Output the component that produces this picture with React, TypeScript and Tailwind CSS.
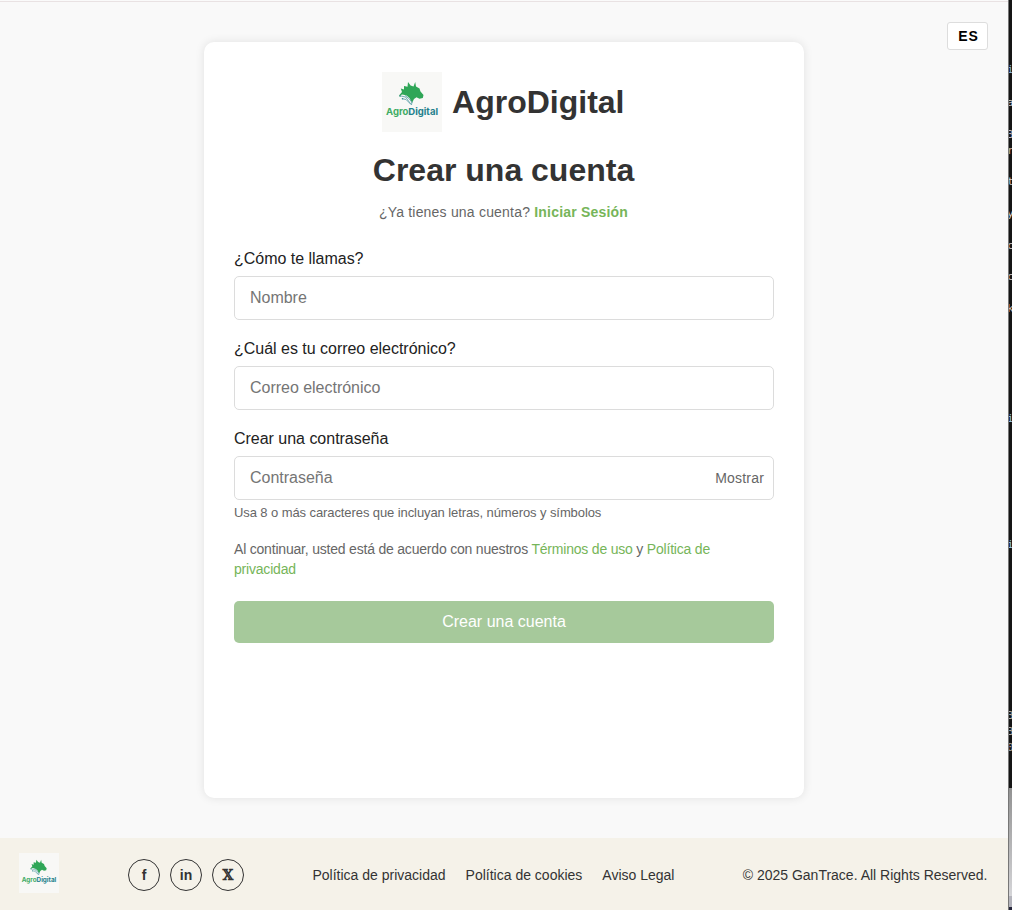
import React from "react";

function Logo({ className }: { className: string }) {
  return (
    <svg viewBox="0 0 60 60" className={className} role="img" aria-label="Logo">
      <rect width="60" height="60" fill="#f8f8f6" />
      <path
        d="M17 23.5L20 20L18.8 16.5L22 17.5L22 14L25.5 14.8L26 10L28.6 13.5L31.5 14.5L33.2 10L34 14.5L37.5 16.5L38.5 19.5L41.5 23L40.8 26L37.5 26.8L34.5 25.2L32 27L30 31L27.5 26L24.5 23.5L20.5 22.5Z"
        fill="#2fa657"
      />
      <path d="M18 23.8L23.5 25L29.5 33L30 29.5M20.5 26.8L24 27.5L28.5 32M23 23.5L27.5 27L30 30.5" fill="none" stroke="#65a5ad" strokeWidth="0.9" />
      <circle cx="18" cy="23.8" r="0.9" fill="#2b9170" />
      <circle cx="20.5" cy="26.8" r="0.8" fill="#2b8790" />
      <text x="4" y="42.8" fontFamily="Inter, 'Liberation Sans', sans-serif" fontSize="9.3" fontWeight="700" textLength="52" lengthAdjust="spacingAndGlyphs">
        <tspan fill="#3fac64">Agro</tspan>
        <tspan fill="#23808c">Digital</tspan>
      </text>
    </svg>
  );
}

function Field({ label, placeholder, type, children }: { label: string; placeholder: string; type: string; children?: React.ReactNode }) {
  return (
    <label className="block text-base leading-[18px] tracking-[-0.02px] text-[#222]">
      {label}
      <span className="mt-2 flex h-11 items-center rounded-[5px] border border-[#dcdcdc] bg-white pr-[9px] pl-[15px]">
        <input type={type} placeholder={placeholder} className="min-w-0 flex-1 bg-transparent pb-px text-base leading-5 outline-none placeholder:text-[#757575]" />
        {children}
      </span>
    </label>
  );
}

const glyphs = [
  { char: "i", top: "top-[62px]", color: "text-[#8ab4d8]" },
  { char: "a", top: "top-[95px]", color: "text-[#d0d0d0]" },
  { char: "3", top: "top-[127px]", color: "text-[#b9b6c8]" },
  { char: "r", top: "top-[143px]", color: "text-[#d0b8a0]" },
  { char: "t", top: "top-[174px]", color: "text-[#d0d0d0]" },
  { char: "y", top: "top-[206px]", color: "text-[#d0d0d0]" },
  { char: "c", top: "top-[238px]", color: "text-[#d0c8c8]" },
  { char: "c", top: "top-[269px]", color: "text-[#d0c8c8]" },
  { char: "k", top: "top-[301px]", color: "text-[#d0c0bc]" },
  { char: "i", top: "top-[411px]", color: "text-[#9ac4e0]" },
  { char: "i", top: "top-[537px]", color: "text-[#9ac4e0]" },
  { char: "3", top: "top-[708px]", color: "text-[#aaa]" },
  { char: "3", top: "top-[724px]", color: "text-[#aaa]" },
  { char: "0", top: "top-[740px]", color: "text-[#aaa]" },
];

function EditorEdge() {
  return (
    <aside aria-hidden="true" className="relative flex w-1 shrink-0 flex-col overflow-hidden border-l border-[#777] bg-[#151515]">
      <div className="mt-[788px] h-[108px] bg-linear-to-b from-[#929292] to-[#d5d5d8]" />
      <div className="h-[11px] bg-[#b4b4bc]" />
      <div className="flex-1 bg-[#25253a]" />
      {glyphs.map((g) => (
        <span key={g.top} className={`absolute -left-0.5 font-['DejaVu_Sans_Mono',monospace] text-[11px] leading-4 ${g.top} ${g.color}`}>
          {g.char}
        </span>
      ))}
    </aside>
  );
}

const socialClass = "flex size-8 items-center justify-center rounded-full border border-[#333] text-sm leading-none font-bold";

export default function App() {
  return (
    <div className="flex h-[910px] w-[1012px] overflow-hidden font-['Liberation_Sans',Arial,sans-serif] text-[#333]">
      <div className="flex w-[1008px] shrink-0 flex-col bg-[#f9f9f9]">
        <div className="h-px bg-[#fafafa]" />
        <div className="h-px shrink-0 bg-[#e9e2e3]" />
        <main className="grid h-[836px] grid-cols-[204px_600px_204px] items-start">
          <section className="col-start-2 mt-10 h-[756px] rounded-[10px] bg-white px-[30px] pt-[30px] shadow-[0_0_10px_rgba(0,0,0,0.1)]">
            <div className="flex items-center justify-center gap-2.5 pr-[1.5px]">
              <Logo className="size-[60px]" />
              <h1 className="text-[32px] leading-[37px] font-bold">AgroDigital</h1>
            </div>
            <h2 className="mt-5 pr-px text-center text-[32px] leading-[37px] font-bold">Crear una cuenta</h2>
            <p className="mt-[15px] pr-px text-center text-sm leading-4 tracking-[0.2px] text-[#666]">
              ¿Ya tienes una cuenta? <a href="#" className="font-bold text-[#76b559]">Iniciar Sesión</a>
            </p>
            <form className="mt-[30px] flex flex-col gap-5">
              <Field label="¿Cómo te llamas?" placeholder="Nombre" type="text" />
              <Field label="¿Cuál es tu correo electrónico?" placeholder="Correo electrónico" type="email" />
              <Field label="Crear una contraseña" placeholder="Contraseña" type="password">
                <button type="button" className="text-sm leading-4 tracking-[0.2px] text-[#666]">Mostrar</button>
              </Field>
              <p className="-mt-[15px] text-[13px] leading-[15px] tracking-[-0.09px] text-[#666]">Usa 8 o más caracteres que incluyan letras, números y símbolos</p>
              <p className="-mt-px text-sm leading-5 tracking-[-0.2px] text-[#666]">
                Al continuar, usted está de acuerdo con nuestros <a href="#" className="text-[#76b559]">Términos de uso</a> y{" "}
                <a href="#" className="text-[#76b559]">Política de<br />privacidad</a>
              </p>
              <button type="button" className="mt-0.5 h-[42px] rounded-[5px] bg-[#a6c99b] text-base leading-[18px] text-white">Crear una cuenta</button>
            </form>
          </section>
          <button type="button" className="mt-5 mr-5 flex h-7 w-[41px] items-center justify-center justify-self-end rounded-[3px] border border-[#ddd] bg-white pl-0.5 text-sm font-bold tracking-[1px] text-black">ES</button>
        </main>
        <footer className="flex h-[72px] items-center bg-[#f5f2e9] pr-[20.5px] pb-px pl-[19px] text-sm leading-4">
          <Logo className="-mt-0.5 size-10" />
          <div className="mt-[3px] ml-[69px] flex gap-2.5">
            <a href="#" className={socialClass}>f</a>
            <a href="#" className={socialClass}>in</a>
            <a href="#" className={socialClass}><span className="font-['DejaVu_Serif',serif]">𝕏</span></a>
          </div>
          <nav className="mt-[3px] ml-[68.5px] flex gap-5">
            <a href="#">Política de privacidad</a>
            <a href="#">Política de cookies</a>
            <a href="#">Aviso Legal</a>
          </nav>
          <p className="mt-[3px] ml-auto">© 2025 GanTrace. All Rights Reserved.</p>
        </footer>
      </div>
      <EditorEdge />
    </div>
  );
}
